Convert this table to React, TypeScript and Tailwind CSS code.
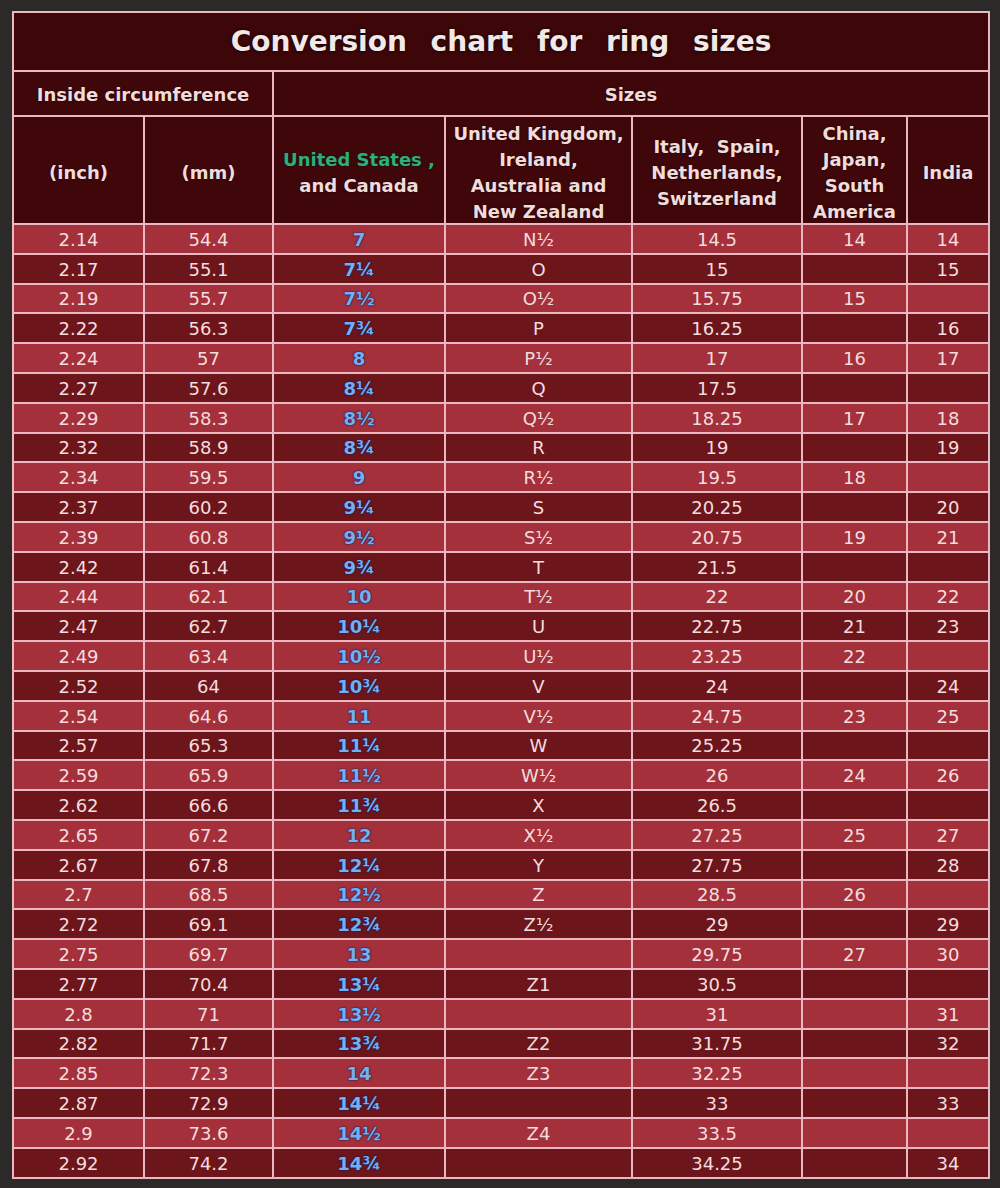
import React from "react";

type Row = [string, string, string, string, string, string, string];

const ROWS: Row[] = [
  ["2.14", "54.4", "7", "N½", "14.5", "14", "14"],
  ["2.17", "55.1", "7¼", "O", "15", "", "15"],
  ["2.19", "55.7", "7½", "O½", "15.75", "15", ""],
  ["2.22", "56.3", "7¾", "P", "16.25", "", "16"],
  ["2.24", "57", "8", "P½", "17", "16", "17"],
  ["2.27", "57.6", "8¼", "Q", "17.5", "", ""],
  ["2.29", "58.3", "8½", "Q½", "18.25", "17", "18"],
  ["2.32", "58.9", "8¾", "R", "19", "", "19"],
  ["2.34", "59.5", "9", "R½", "19.5", "18", ""],
  ["2.37", "60.2", "9¼", "S", "20.25", "", "20"],
  ["2.39", "60.8", "9½", "S½", "20.75", "19", "21"],
  ["2.42", "61.4", "9¾", "T", "21.5", "", ""],
  ["2.44", "62.1", "10", "T½", "22", "20", "22"],
  ["2.47", "62.7", "10¼", "U", "22.75", "21", "23"],
  ["2.49", "63.4", "10½", "U½", "23.25", "22", ""],
  ["2.52", "64", "10¾", "V", "24", "", "24"],
  ["2.54", "64.6", "11", "V½", "24.75", "23", "25"],
  ["2.57", "65.3", "11¼", "W", "25.25", "", ""],
  ["2.59", "65.9", "11½", "W½", "26", "24", "26"],
  ["2.62", "66.6", "11¾", "X", "26.5", "", ""],
  ["2.65", "67.2", "12", "X½", "27.25", "25", "27"],
  ["2.67", "67.8", "12¼", "Y", "27.75", "", "28"],
  ["2.7", "68.5", "12½", "Z", "28.5", "26", ""],
  ["2.72", "69.1", "12¾", "Z½", "29", "", "29"],
  ["2.75", "69.7", "13", "", "29.75", "27", "30"],
  ["2.77", "70.4", "13¼", "Z1", "30.5", "", ""],
  ["2.8", "71", "13½", "", "31", "", "31"],
  ["2.82", "71.7", "13¾", "Z2", "31.75", "", "32"],
  ["2.85", "72.3", "14", "Z3", "32.25", "", ""],
  ["2.87", "72.9", "14¼", "", "33", "", "33"],
  ["2.9", "73.6", "14½", "Z4", "33.5", "", ""],
  ["2.92", "74.2", "14¾", "", "34.25", "", "34"],
];

const headCell =
  "flex items-center justify-center bg-[#3f070a] text-center font-bold text-[18px] leading-[26px] text-[#f1dcdc] [text-shadow:0_0_2px_#1a0000]";

function DataRow({ row, light }: { row: Row; light: boolean }) {
  const bg = light ? "bg-[#a3303a]" : "bg-[#6c151b]";

  return (
    <>
      {row.map((value, index) => (
        <div
          key={index}
          className={`flex h-[27.8px] items-center justify-center pt-[2px] text-[18px] leading-none ${bg} ${
            index === 2
              ? "font-bold text-[#74aef4] [text-shadow:0_0_2px_#0b1f55,0_0_1px_#0b1f55]"
              : "text-[#f5dcdf]"
          }`}
        >
          {value}
        </div>
      ))}
    </>
  );
}

export default function App() {
  return (
    <div className="min-h-[1188px] w-[1000px] bg-[#2b2a28] pb-[9px] pl-[12px] pr-[10px] pt-[11px] font-['DejaVu_Sans',sans-serif]">
      <div className="grid grid-cols-[129px_127px_170px_185px_168px_103px_80px] gap-[2px] bg-[#eab8c0] p-[2px]">
        <div className="col-span-7 flex h-[57px] items-center justify-center bg-[#3d0608] text-[28px] font-bold text-[#f3e8e8] [word-spacing:14px] [text-shadow:0_0_3px_#000]">
          Conversion chart for ring sizes
        </div>

        <div className={`col-span-2 h-[43px] pt-[3px] ${headCell}`}>Inside circumference</div>
        <div className={`col-span-5 h-[43px] pt-[3px] ${headCell}`}>Sizes</div>

        <div className={`h-[106px] pt-[6px] ${headCell}`}>(inch)</div>
        <div className={`h-[106px] pt-[6px] ${headCell}`}>(mm)</div>
        <div className={`h-[106px] flex-col pt-[6px] ${headCell}`}>
          <span className="text-[#2fae7a] [text-shadow:0_0_2px_#001a10]">United States ,</span>
          <span>and Canada</span>
        </div>
        <div className={`h-[106px] flex-col pt-[6px] ${headCell}`}>
          <span>United Kingdom,</span>
          <span>Ireland,</span>
          <span>Australia and</span>
          <span>New Zealand</span>
        </div>
        <div className={`h-[106px] flex-col pt-[6px] ${headCell}`}>
          <span className="whitespace-pre">Italy,  Spain,</span>
          <span>Netherlands,</span>
          <span>Switzerland</span>
        </div>
        <div className={`h-[106px] flex-col pt-[6px] ${headCell}`}>
          <span>China,</span>
          <span>Japan,</span>
          <span>South</span>
          <span>America</span>
        </div>
        <div className={`h-[106px] pt-[6px] ${headCell}`}>India</div>

        {ROWS.map((row, index) => (
          <DataRow key={row[0]} row={row} light={index % 2 === 0} />
        ))}
      </div>
    </div>
  );
}
